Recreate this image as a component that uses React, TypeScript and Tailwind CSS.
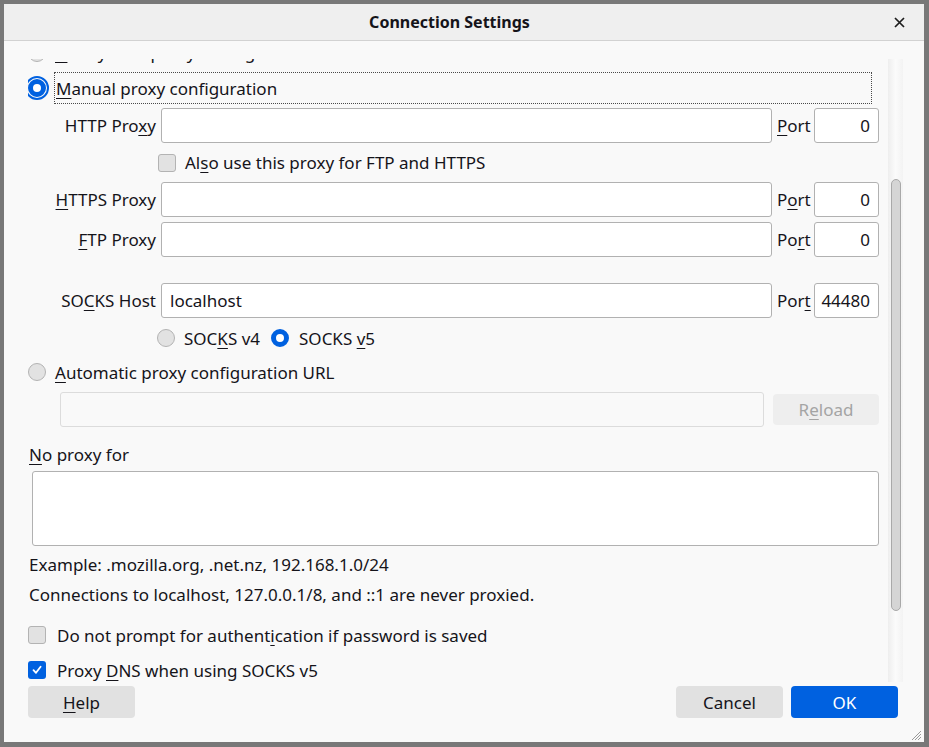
import React from 'react';
import clsx from 'clsx';

const Key: React.FC<{ children: React.ReactNode }> = ({ children }) => (
  <u className="underline decoration-1 underline-offset-[3px]">{children}</u>
);

const Radio: React.FC<{ checked?: boolean; focus?: boolean }> = ({ checked, focus }) => (
  <span
    className={clsx(
      'block w-[18px] h-[18px] rounded-full shrink-0 box-border',
      checked ? 'border-[5px] border-[#0061e0] bg-white' : 'border border-[#b3b3b3] bg-[#e2e2e2]',
      focus && 'outline-2 outline-solid outline-[#0061e0] outline-offset-1'
    )}
  />
);

const Checkbox: React.FC<{ checked?: boolean }> = ({ checked }) =>
  checked ? (
    <span className="flex items-center justify-center w-[18px] h-[18px] rounded-[3px] bg-[#0061e0] shrink-0">
      <svg width="12" height="12" viewBox="0 0 12 12" fill="none">
        <path d="M2.5 6.2 L5 8.8 L9.6 2.8" stroke="white" strokeWidth="1.8" strokeLinecap="round" strokeLinejoin="round" />
      </svg>
    </span>
  ) : (
    <span className="block w-[18px] h-[18px] rounded-[3px] border border-[#b3b3b3] bg-[#e2e2e2] shrink-0" />
  );

const Field: React.FC<{ value?: string; right?: boolean; className?: string }> = ({ value, right, className }) => (
  <div
    className={clsx(
      'h-[35px] bg-white border border-[#b1b1b1] rounded-[3px] flex items-center px-[8px] pt-[1px] shrink-0',
      right && 'justify-end',
      className
    )}
  >
    {value}
  </div>
);

const ProxyRow: React.FC<{ label: React.ReactNode; port: React.ReactNode; host?: string; portValue: string; className?: string }> = ({ label, port, host, portValue, className }) => (
  <div className={clsx('flex items-center h-[35px] shrink-0', className)}>
    <div className="w-[128px] text-right shrink-0 whitespace-nowrap pt-[1px]">{label}</div>
    <Field value={host} className="ml-[5px] w-[611px]" />
    <div className="ml-[5px] w-[32px] shrink-0 whitespace-nowrap pt-[1px]">{port}</div>
    <Field value={portValue} right className="ml-[5px] w-[65px]" />
  </div>
);

export default function App() {
  return (
    <div className="w-[929px] h-[747px] bg-[#787878] pt-[4px] pl-[4px] font-['Noto_Sans',sans-serif] text-[17px] leading-[20px] text-[#15141a]">
      <div className="relative w-[920px] h-[738px] bg-[#f9f9f9] flex flex-col">
        {/* title bar */}
        <div className="h-[37px] bg-[#efefef] border-b border-[#d2d2d2] flex items-center shrink-0">
          <div className="flex-1 text-center font-bold text-[16px]">Connection Settings</div>
          <div className="w-[29px] flex items-center">
            <svg width="11" height="11" viewBox="0 0 11 11" className="ml-[-1px]">
              <path d="M1 1 L10 10 M10 1 L1 10" stroke="#1d1d1d" strokeWidth="1.7" />
            </svg>
          </div>
        </div>

        <div className="pl-[24px] pt-[18px] flex flex-col">
          {/* scrolled area */}
          <div className="w-[875px] h-[623px] flex overflow-hidden">
            <div className="w-[852px] shrink-0 flex flex-col mt-[-21px]">
              <div className="flex items-center h-[30px] shrink-0">
                <Radio />
                <span className="ml-[9px]"><Key>U</Key>se system proxy settings</span>
              </div>

              <div className="flex items-center h-[32px] mt-[4px] pr-[8px] shrink-0">
                <Radio checked focus />
                <div className="ml-[8px] flex-1 h-[32px] flex items-center pl-[1px] pt-[1px] border border-dotted border-[#4a4a4a]">
                  <span><Key>M</Key>anual proxy configuration</span>
                </div>
              </div>

              <ProxyRow
                className="mt-[4px]"
                label={<>HTTP Pro<Key>x</Key>y</>}
                port={<><Key>P</Key>ort</>}
                portValue="0"
              />

              <div className="flex items-center h-[39px] shrink-0">
                <div className="ml-[130px]"><Checkbox /></div>
                <span className="ml-[9px] pt-[1px]">Al<Key>s</Key>o use this proxy for FTP and HTTPS</span>
              </div>

              <ProxyRow
                label={<><Key>H</Key>TTPS Proxy</>}
                port={<>P<Key>o</Key>rt</>}
                portValue="0"
              />
              <ProxyRow
                className="mt-[5px]"
                label={<><Key>F</Key>TP Proxy</>}
                port={<>Po<Key>r</Key>t</>}
                portValue="0"
              />
              <ProxyRow
                className="mt-[26px]"
                label={<>SO<Key>C</Key>KS Host</>}
                port={<>Por<Key>t</Key></>}
                host="localhost"
                portValue="44480"
              />

              <div className="flex items-center h-[40px] shrink-0">
                <div className="ml-[129px]"><Radio /></div>
                <span className="ml-[9px] pt-[1px]">SOC<Key>K</Key>S v4</span>
                <div className="ml-[11px]"><Radio checked /></div>
                <span className="ml-[10px] pt-[1px]">SOCKS <Key>v</Key>5</span>
              </div>

              <div className="flex items-center h-[28px] shrink-0">
                <Radio />
                <span className="ml-[9px] pt-[1px]"><Key>A</Key>utomatic proxy configuration URL</span>
              </div>

              <div className="flex items-center h-[35px] mt-[6px] shrink-0">
                <div className="ml-[32px] w-[704px] h-[35px] border border-[#dcdcdc] bg-[#f9f9f9] rounded-[3px]" />
                <div className="ml-[9px] w-[106px] h-[31px] rounded-[4px] bg-[#eeeeee] text-[#a4a4a4] flex items-center justify-center pt-[1px]">
                  R<Key>e</Key>load
                </div>
              </div>

              <div className="mt-[18px] pl-[1px]"><Key>N</Key>o proxy for</div>
              <div className="mt-[6px] ml-[4px] w-[847px] h-[75px] bg-white border border-[#b1b1b1] rounded-[3px] shrink-0" />
              <div className="mt-[9px] pl-[1px]">Example: .mozilla.org, .net.nz, 192.168.1.0/24</div>
              <div className="mt-[10px] pl-[1px]">Connections to localhost, 127.0.0.1/8, and ::1 are never proxied.</div>

              <div className="flex items-center h-[30px] mt-[15px] shrink-0">
                <Checkbox />
                <span className="ml-[11px] pt-[1px]">Do not prompt for authent<Key>i</Key>cation if password is saved</span>
              </div>
              <div className="flex items-center h-[30px] mt-[5px] shrink-0">
                <Checkbox checked />
                <span className="ml-[11px] pt-[1px]">Proxy <Key>D</Key>NS when using SOCKS v5</span>
              </div>
            </div>

            {/* scrollbar */}
            <div className="ml-[8px] w-[15px] h-full shrink-0 bg-gradient-to-r from-[#eeeeee] via-[#fbfbfb] to-[#f3f3f3] flex justify-center">
              <div className="mt-[120px] w-[10px] h-[432px] rounded-full bg-[#d5d5d5] border border-[#a9a9a9]" />
            </div>
          </div>

          {/* buttons */}
          <div className="mt-[4px] w-[870px] flex items-center h-[32px]">
            <div className="w-[107px] h-[32px] rounded-[4px] bg-[#e1e1e1] flex items-center justify-center pt-[1px]">
              <Key>H</Key>elp
            </div>
            <div className="flex-1" />
            <div className="w-[107px] h-[32px] rounded-[4px] bg-[#e1e1e1] flex items-center justify-center pt-[1px]">Cancel</div>
            <div className="ml-[8px] w-[107px] h-[32px] rounded-[4px] bg-[#0061e0] text-white flex items-center justify-center pt-[1px]">OK</div>
          </div>
        </div>

        {/* resize grip */}
        <svg width="12" height="12" viewBox="0 0 12 12" className="absolute right-[2px] bottom-[1px]">
          <path d="M11 2 L2 11 M11 5 L5 11 M11 8 L8 11" stroke="#9a9a9a" strokeWidth="1" />
        </svg>
      </div>
    </div>
  );
}
